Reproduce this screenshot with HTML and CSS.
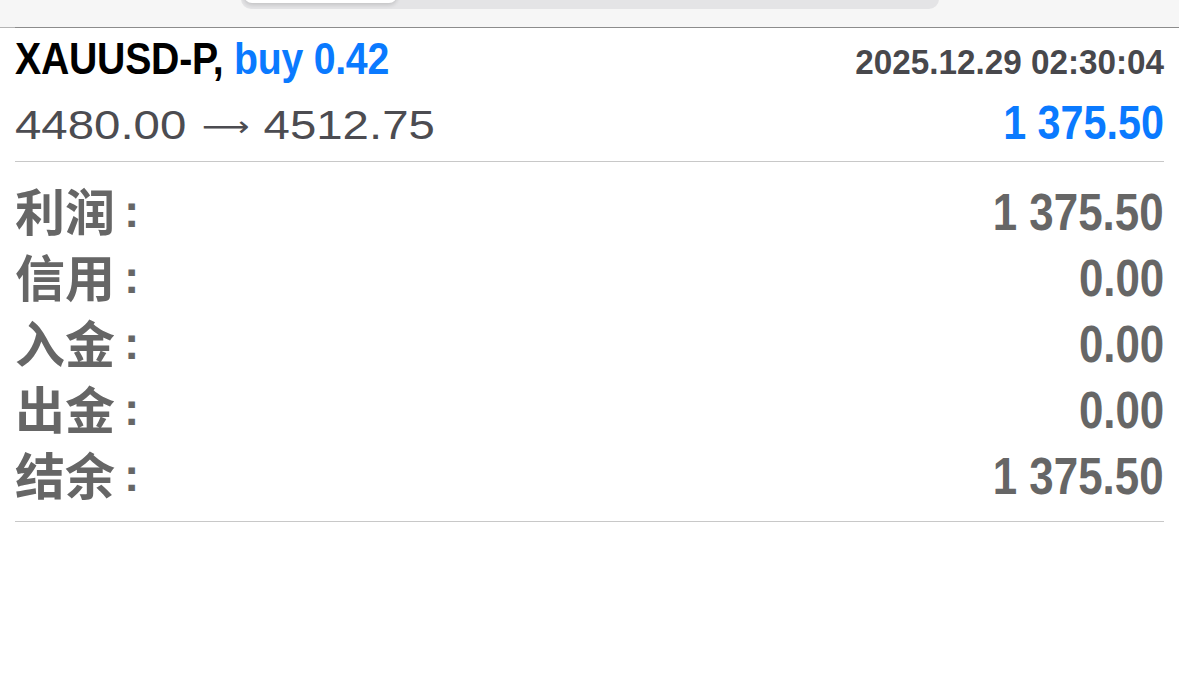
FILE: index.html
```html
<!DOCTYPE html>
<html lang="zh">
<head>
<meta charset="utf-8">
<link rel="stylesheet" href="styles.css">
</head>
<body>
<div class="topbar">
  <div class="seg"><div class="seg-active"></div></div>
</div>
<div class="content">
  <div class="trade">
    <div class="row row1">
      <span class="sym">XAUUSD-P, <span class="blue">buy 0.42</span></span>
      <span class="time">2025.12.29 02:30:04</span>
    </div>
    <div class="row row2">
      <span class="prices">4480.00<span class="arrow">⟶</span>4512.75</span>
      <span class="profit">1 375.50</span>
    </div>
  </div>
  <div class="summary">
    <div class="srow"><span class="lbl">利润<span class="colon">:</span></span><span class="val">1 375.50</span></div>
    <div class="srow"><span class="lbl">信用<span class="colon">:</span></span><span class="val">0.00</span></div>
    <div class="srow"><span class="lbl">入金<span class="colon">:</span></span><span class="val">0.00</span></div>
    <div class="srow"><span class="lbl">出金<span class="colon">:</span></span><span class="val">0.00</span></div>
    <div class="srow"><span class="lbl">结余<span class="colon">:</span></span><span class="val">1 375.50</span></div>
  </div>
</div>
</body>
</html>
```
FILE: styles.css
```css
html, body { margin: 0; padding: 0; background: #fff; }
body { font-family: "Liberation Sans", Arial, sans-serif; width: 1179px; height: 689px; overflow: hidden; }

.topbar {
  position: relative;
  height: 27px;
  background: #f6f6f6;
  border-bottom: 1px solid #8c8c8c;
  display: flex;
  justify-content: center;
  overflow: visible;
}
.topbar::after {
  content: "";
  position: absolute;
  left: 0;
  bottom: -1px;
  width: 15px;
  height: 1px;
  background: #b4b4b4;
}
.seg {
  width: 698px;
  height: 30px;
  margin-top: -21px;
  background: #e4e4e6;
  border-radius: 10px;
  padding: 0 3px 6px;
  box-sizing: border-box;
  display: flex;
  align-items: flex-end;
  margin-left: 1px;
}
.seg-active {
  width: 153px;
  height: 24px;
  background: #fff;
  border-radius: 8px;
  box-shadow: 0 2px 4px rgba(0,0,0,0.15);
}

.content { padding: 0 15px; }

.trade { border-bottom: 1px solid #c8c8c8; }
.row { display: flex; justify-content: space-between; align-items: baseline; }
.row1 { height: 62px; }
.row2 { height: 71px; }

.sym {
  display: inline-block;
  font-weight: bold;
  font-size: 44px;
  line-height: 62px;
  color: #000;
  letter-spacing: -0.3px;
  transform: scaleX(0.892);
  transform-origin: left center;
  white-space: nowrap;
}
.blue { color: #0a7aff; }
.time {
  display: inline-block;
  font-weight: bold;
  font-size: 35px;
  color: #48484c;
  transform: scaleX(0.95);
  transform-origin: right center;
  white-space: nowrap;
}
.prices {
  display: inline-block;
  font-size: 40px;
  line-height: 71px;
  color: #4c4c51;
  white-space: nowrap;
  transform: scaleX(1.185);
  transform-origin: left center;
}
.arrow {
  display: inline-block;
  font-family: "DejaVu Sans", sans-serif;
  font-size: 28px;
  margin: 0 12px 0 13px;
  position: relative;
  top: -3px;
}
.profit {
  display: inline-block;
  font-weight: bold;
  font-size: 48px;
  color: #0a7aff;
  transform: scaleX(0.86);
  transform-origin: right center;
  white-space: nowrap;
}

.summary { border-bottom: 1px solid #c8c8c8; padding: 17px 0 12px; }
.srow { display: flex; justify-content: space-between; align-items: center; height: 66px; }
.lbl {
  font-family: "Noto Sans CJK SC", sans-serif;
  font-weight: bold;
  font-size: 50px;
  color: #666;
  line-height: 66px;
  white-space: nowrap;
}
.colon {
  font-family: "Liberation Sans", sans-serif;
  font-weight: bold;
  font-size: 46px;
  margin-left: 9px;
  position: relative;
  top: -4px;
}
.val {
  display: inline-block;
  font-weight: bold;
  font-size: 51px;
  color: #666;
  transform: scaleX(0.86);
  transform-origin: right center;
  white-space: nowrap;
}
```
